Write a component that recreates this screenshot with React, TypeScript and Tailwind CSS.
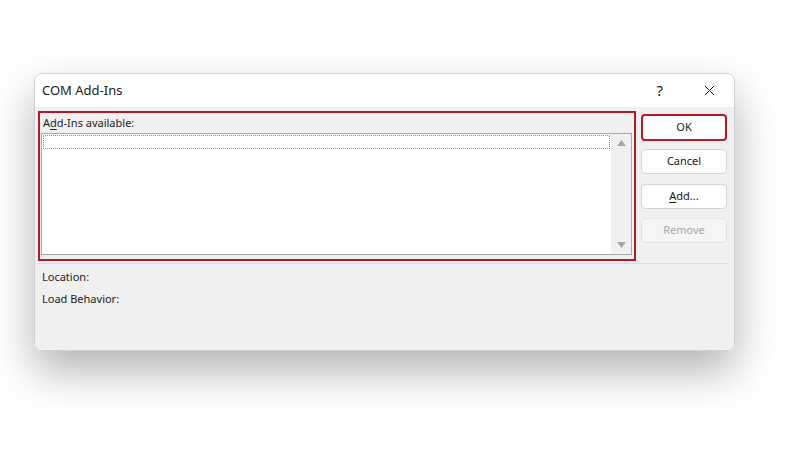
import { X } from "lucide-react";

const font = { fontFamily: '"Noto Sans", "Open Sans", Arial, sans-serif' };

function DlgButton({
  children,
  primary,
  disabled,
}: {
  children: React.ReactNode;
  primary?: boolean;
  disabled?: boolean;
}) {
  return (
    <div
      className={
        "flex items-center justify-center rounded-[4px] text-[11px] " +
        (primary
          ? "h-[27px] border-2 border-[#b31b24] bg-[#fdfdfd] text-[#1a1a1a]"
          : disabled
            ? "h-[25px] border border-[#e3e3e3] bg-[#f5f5f5] text-[#a8a8a8]"
            : "h-[25px] border border-[#d4d4d4] bg-[#fdfdfd] text-[#1a1a1a]")
      }
    >
      {children}
    </div>
  );
}

export default function App() {
  return (
    <div className="h-[450px] w-[800px] overflow-hidden bg-white pl-[34px] pt-[73px]" style={font}>
      {/* Dialog */}
      <div className="flex h-[278px] w-[701px] flex-col overflow-hidden rounded-[8px] border border-[#cfcfcf] shadow-[0_20px_44px_rgba(0,0,0,0.3)]">
        {/* Title bar */}
        <div className="flex h-[33px] items-center bg-white pl-[7px] pr-[16px]">
          <span className="flex-1 text-[13px] text-[#1a1a1a]">COM Add-Ins</span>
          <span className="mr-[38px] text-[15px] text-[#1a1a1a]">?</span>
          <X className="h-[17px] w-[17px] text-[#1a1a1a]" strokeWidth={1.4} />
        </div>

        {/* Body */}
        <div className="flex flex-1 flex-col bg-[#f0f0f0] px-[3px] pt-[4px] text-[11px] text-[#222]">
          <div className="flex">
            {/* Red highlight around list */}
            <div className="flex h-[150px] w-[598px] flex-col border-2 border-[#b31b24] pl-[1px] pr-[2px] pb-[4px]">
              <div className="h-[20px] pl-[2px] pt-[1px] leading-[17px]">
                A<span className="underline underline-offset-2">d</span>d-Ins available:
              </div>
              <div className="flex flex-1 border border-[#a8a8a8] bg-white">
                <div className="flex-1 p-[1px]">
                  <div className="h-[14px] border border-dotted border-[#8a8a8a]" />
                </div>
                <div className="flex w-[20px] flex-col items-center justify-between bg-[#f0f0f0] py-[6px]">
                  <svg width="9" height="6" viewBox="0 0 9 6">
                    <path d="M4.5 0 L9 6 L0 6 Z" fill="#a6a6a6" />
                  </svg>
                  <svg width="9" height="6" viewBox="0 0 9 6">
                    <path d="M0 0 L9 0 L4.5 6 Z" fill="#a6a6a6" />
                  </svg>
                </div>
              </div>
            </div>

            {/* Buttons */}
            <div className="ml-[5px] flex w-[86px] flex-col pt-[3px]">
              <DlgButton primary>OK</DlgButton>
              <div className="mt-[8px]">
                <DlgButton>Cancel</DlgButton>
              </div>
              <div className="mt-[10px]">
                <DlgButton>
                  <span>
                    <span className="underline underline-offset-2">A</span>dd...
                  </span>
                </DlgButton>
              </div>
              <div className="mt-[9px]">
                <DlgButton disabled>Remove</DlgButton>
              </div>
            </div>
          </div>

          <div className="mr-[3px] mt-[2px] h-px bg-[#dcdcdc]" />

          <div className="mt-[5px] pl-[4px] leading-[16px]">Location:</div>
          <div className="mt-[6px] pl-[4px] leading-[16px]">Load Behavior:</div>
        </div>
      </div>
    </div>
  );
}
